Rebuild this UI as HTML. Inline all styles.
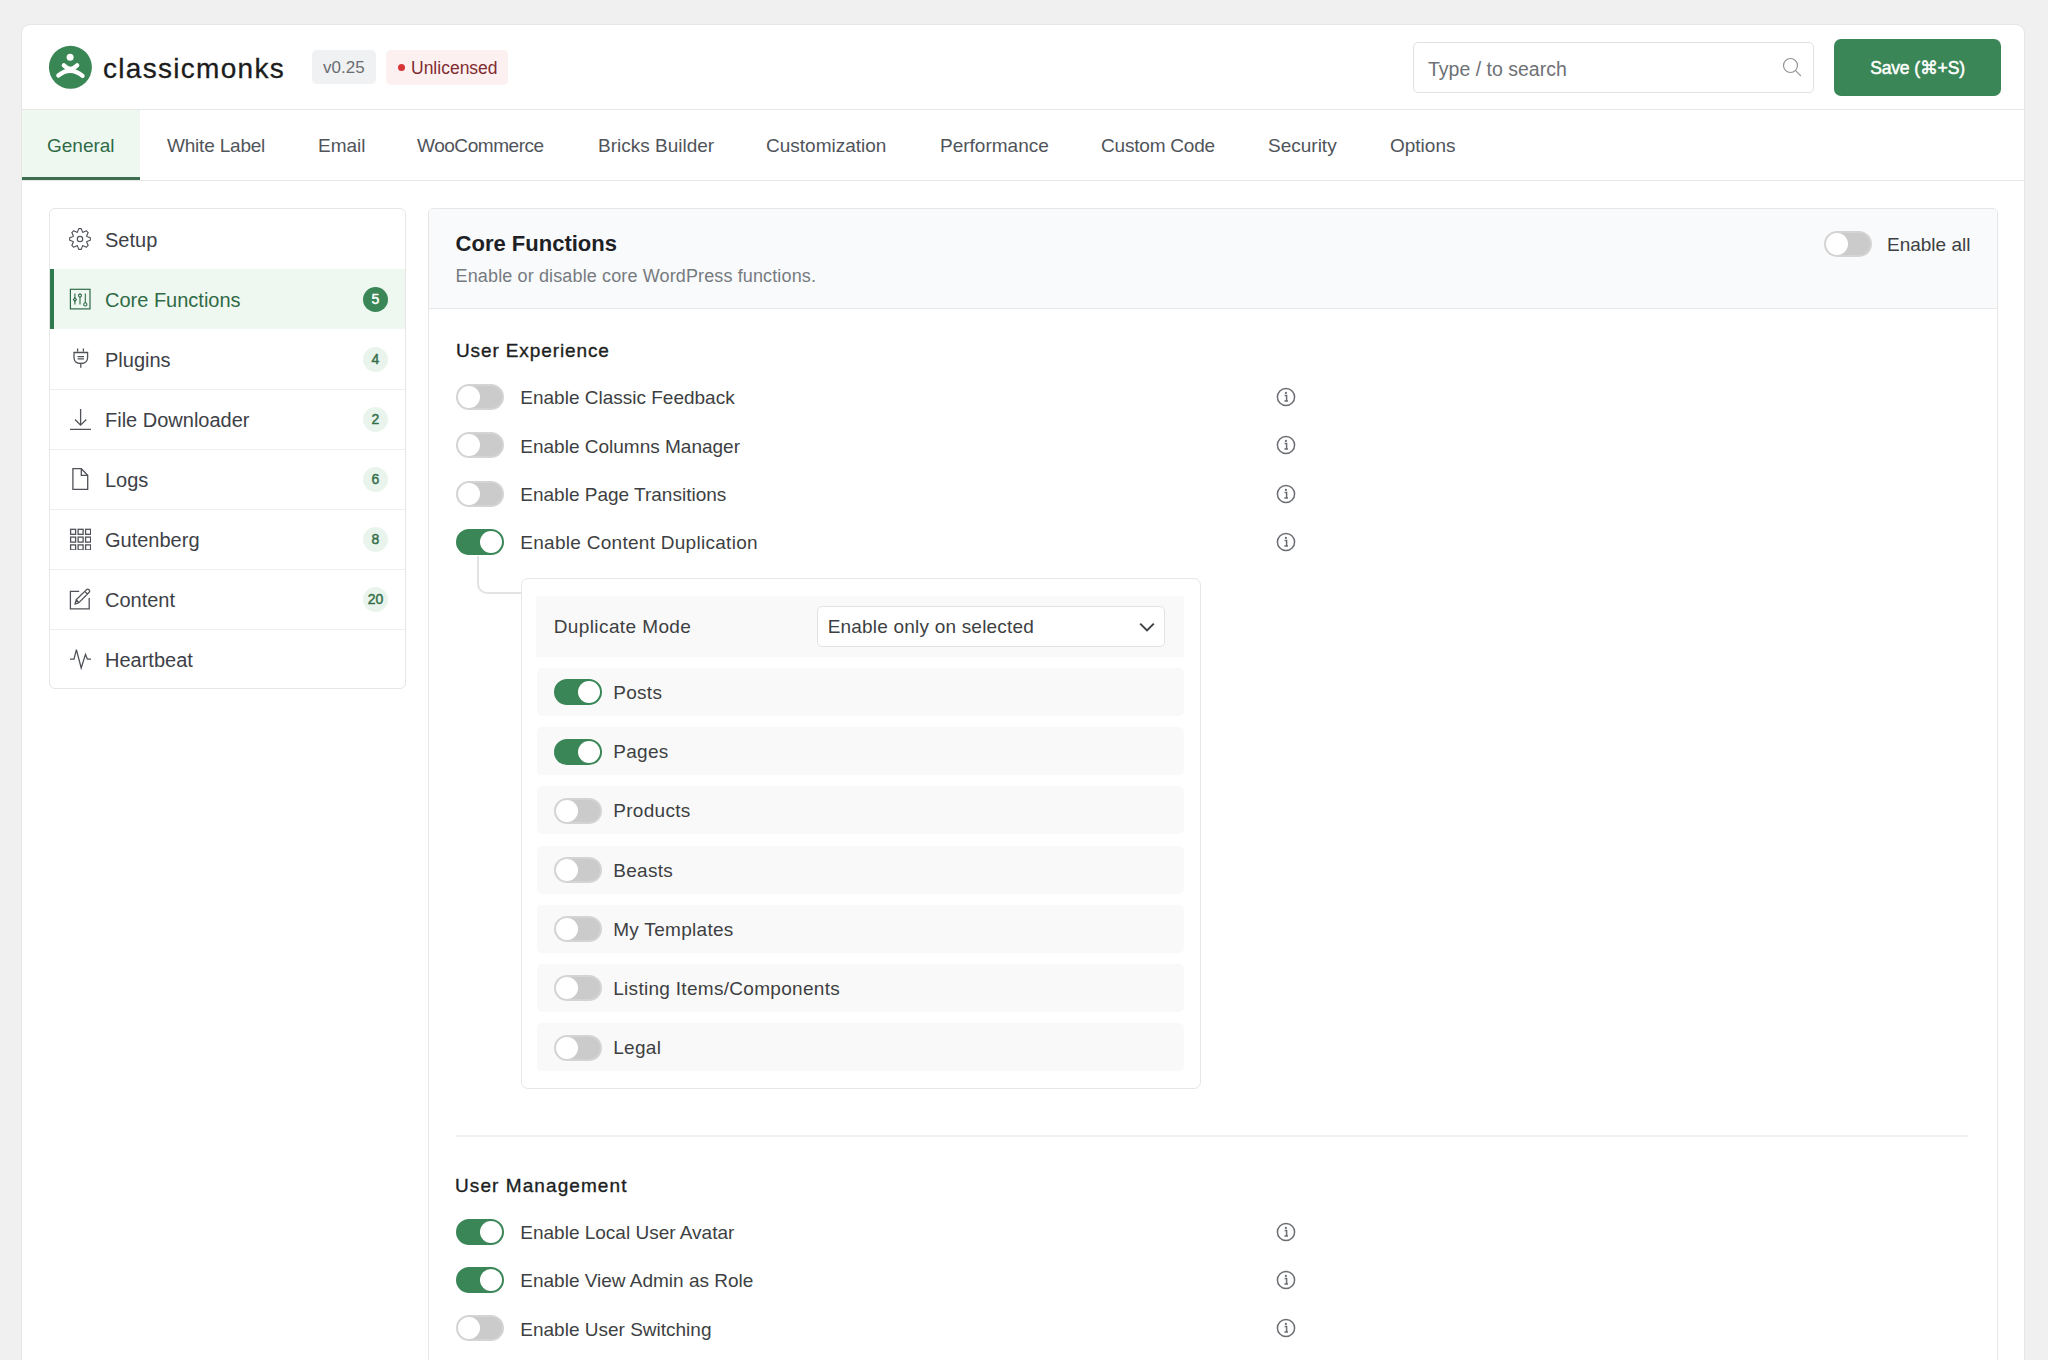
<!DOCTYPE html>
<html><head><meta charset="utf-8">
<style>
*{box-sizing:border-box;margin:0;padding:0}
html,body{width:2048px;height:1360px;overflow:hidden;background:#f0f0f0;font-family:"Liberation Sans",sans-serif;color:#3c3f44}
.abs{position:absolute}
.t{position:absolute;white-space:nowrap;line-height:20px;height:20px}
.card{position:absolute;left:21px;top:24px;width:2004px;height:1400px;background:#fff;border:1px solid #e6e6e6;border-radius:9px}
.hdr-line{position:absolute;left:22px;width:2002px;height:1px;background:#e7e7e7}
.badge{position:absolute;border-radius:5px}
.tab{position:absolute;top:136px;font-size:19px;color:#50545a;line-height:20px;white-space:nowrap}
.side{position:absolute;left:49px;top:208px;width:357px;height:481px;border:1px solid #e6e6e6;border-radius:6px;background:#fff;overflow:hidden}
.srow{position:absolute;left:0;width:355px;height:60px}
.sdiv{position:absolute;left:0;width:355px;height:1px;background:#efefef}
.slabel{position:absolute;left:55px;top:20.5px;font-size:20px;color:#3d4147;line-height:20px;white-space:nowrap}
.sbadge{position:absolute;left:313px;top:18px;width:25px;height:25px;border-radius:50%;background:#e9f4ed;color:#356f4a;font-weight:400;-webkit-text-stroke:0.45px #356f4a;font-size:14px;line-height:25px;text-align:center}
.sicon{position:absolute;left:19.2px;top:18.6px;width:22px;height:22px}
.main{position:absolute;left:428px;top:208px;width:1570px;height:1200px;border:1px solid #e6e6e6;border-radius:5px;background:#fff;overflow:hidden}
.tog{position:absolute;width:48px;height:26px;border-radius:13px;background:#cbcbcb;border:2px solid #d4d4d4}
.tog::after{content:"";position:absolute;left:0px;top:0px;width:22px;height:22px;border-radius:50%;background:#fff}
.tog.on{background:#3a8657;border-color:#3a8657}
.tog.on::after{left:22px}
.lbl{position:absolute;font-size:19px;color:#3d3f42;line-height:20px;white-space:nowrap}
.info{position:absolute;width:20px;height:20px}
</style></head><body>

<div class="card"></div>
<!-- header -->
<svg class="abs" style="left:48px;top:45px" width="44" height="44" viewBox="0 0 44 44">
  <circle cx="22.4" cy="22.3" r="21.5" fill="#3a8756"/>
  <circle cx="22.1" cy="12.2" r="3.5" fill="#fff"/>
  <path d="M15.8 20.3 Q22.4 27.4 29.2 20.3" stroke="#fff" stroke-width="4.3" stroke-linecap="round" fill="none"/>
  <path d="M10.3 30.5 Q22.4 20.8 34.6 30.9" stroke="#fff" stroke-width="4.2" stroke-linecap="round" fill="none"/>
</svg>
<div class="t" style="left:103px;top:54px;font-size:28px;line-height:30px;height:30px;letter-spacing:1.3px;-webkit-text-stroke:0.3px #1c1c1c;color:#1c1c1c">classicmonks</div>
<div class="badge" style="left:312px;top:50px;width:64px;height:34px;background:#f0f1f3"></div>
<div class="t" style="left:323px;top:58px;font-size:17px;color:#6a6d72">v0.25</div>
<div class="badge" style="left:386px;top:50px;width:122px;height:35px;background:#fdf0f0"></div>
<div class="abs" style="left:398px;top:64px;width:7px;height:7px;border-radius:50%;background:#d63638"></div>
<div class="t" style="left:411px;top:58px;font-size:17.5px;color:#7f2c31">Unlicensed</div>

<div class="abs" style="left:1413px;top:42px;width:401px;height:51px;border:1px solid #e2e2e2;border-radius:5px;background:#fff"></div>
<div class="t" style="left:1428px;top:59px;font-size:19.5px;color:#6e7176">Type / to search</div>
<svg class="abs" style="left:1780px;top:55px" width="24" height="24" viewBox="0 0 24 24">
  <circle cx="10.5" cy="10.5" r="7" stroke="#909295" stroke-width="1.2" fill="none"/>
  <path d="M15.6 15.6 L20.6 20.6" stroke="#909295" stroke-width="1.2" stroke-linecap="round"/>
</svg>
<div class="abs" style="left:1834px;top:39px;width:167px;height:57px;border-radius:7px;background:#3a8657"></div>
<div class="t" style="left:1834px;top:57.5px;width:167px;text-align:center;font-size:17.6px;-webkit-text-stroke:0.5px #fff;letter-spacing:-0.2px;color:#fff">Save (⌘+S)</div>

<div class="hdr-line" style="top:109px"></div>

<!-- tabs -->
<div class="abs" style="left:22px;top:110px;width:118px;height:70px;background:#eef8f1"></div>
<div class="abs" style="left:22px;top:177px;width:118px;height:3px;background:#3b6f4f"></div>
<div class="hdr-line" style="top:180px"></div>
<div class="tab" style="left:47px;color:#2f6b46">General</div>
<div class="tab" style="left:167px;letter-spacing:-0.2px">White Label</div>
<div class="tab" style="left:318px">Email</div>
<div class="tab" style="left:417px;letter-spacing:-0.45px">WooCommerce</div>
<div class="tab" style="left:598px">Bricks Builder</div>
<div class="tab" style="left:766px">Customization</div>
<div class="tab" style="left:940px">Performance</div>
<div class="tab" style="left:1101px;letter-spacing:-0.2px">Custom Code</div>
<div class="tab" style="left:1268px">Security</div>
<div class="tab" style="left:1390px">Options</div>


<div class="side">
  <div class="srow" style="top:0">
    <svg class="sicon" viewBox="0 0 22 22"><path d="M8.43 4.17 L9.75 0.67 L12.25 0.67 L13.57 4.17 L14.01 4.35 L17.42 2.82 L19.18 4.58 L17.65 7.99 L17.83 8.43 L21.33 9.75 L21.33 12.25 L17.83 13.57 L17.65 14.01 L19.18 17.42 L17.42 19.18 L14.01 17.65 L13.57 17.83 L12.25 21.33 L9.75 21.33 L8.43 17.83 L7.99 17.65 L4.58 19.18 L2.82 17.42 L4.35 14.01 L4.17 13.57 L0.67 12.25 L0.67 9.75 L4.17 8.43 L4.35 7.99 L2.82 4.58 L4.58 2.82 L7.99 4.35Z" fill="none" stroke="#4f5257" stroke-width="1.15" stroke-linejoin="round"/><circle cx="11" cy="11" r="2.7" fill="none" stroke="#4f5257" stroke-width="1.15"/></svg>
    <div class="slabel">Setup</div>
  </div>
  <div class="srow" style="top:60px;background:#eff7f1">
    <div class="abs" style="left:0;top:0;width:4px;height:60px;background:#2f7a4c"></div>
    <svg class="sicon" viewBox="0 0 22 22"><rect x="1.4" y="1.3" width="19.6" height="19.6" fill="none" stroke="#2f6b46" stroke-width="1.2"/>
      <path d="M5.9 5.6V16.4M11 5.6V16.4M16.3 5.6V16.4" stroke="#2f6b46" stroke-width="1.1"/>
      <path d="M5.9 9.8 L7.4 11.6 L5.9 13.4 L4.4 11.6Z" fill="#eff7f1" stroke="#2f6b46" stroke-width="1.1"/>
      <circle cx="11" cy="7.6" r="1.5" fill="#eff7f1" stroke="#2f6b46" stroke-width="1.1"/>
      <circle cx="16.3" cy="16.4" r="1.6" fill="#eff7f1" stroke="#2f6b46" stroke-width="1.1"/>
    </svg>
    <div class="slabel" style="color:#2f6b46">Core Functions</div>
    <div class="sbadge" style="background:#3a8657;color:#fff;-webkit-text-stroke:0.45px #fff">5</div>
  </div>
  <div class="srow" style="top:120px">
    <svg class="sicon" viewBox="0 0 22 22"><path d="M8.6 0.5V3.5M14.4 0.5V3.5M5 4.5H18.6V9.5Q18.6 15.5 11.8 15.5Q5 15.5 5 9.5Z M11.8 15.5V19.8 M8.6 8.6H15 M8.6 10.8H15" fill="none" stroke="#4f5257" stroke-width="1.3"/></svg>
    <div class="slabel">Plugins</div>
    <div class="sbadge">4</div>
  </div>
  <div class="sdiv" style="top:180px"></div>
  <div class="srow" style="top:180px">
    <svg class="sicon" viewBox="0 0 22 22"><path d="M11.6 1V17.2M6 11.5L11.6 17.2L17.3 11.5M1 21.5H22" fill="none" stroke="#4f5257" stroke-width="1.3"/></svg>
    <div class="slabel">File Downloader</div>
    <div class="sbadge">2</div>
  </div>
  <div class="sdiv" style="top:240px"></div>
  <div class="srow" style="top:240px">
    <svg class="sicon" viewBox="0 0 22 22"><path d="M3.9 0.7H12.3L18.7 7.3V21.3H3.9Z M12.3 0.7V7.3H18.7" fill="none" stroke="#4f5257" stroke-width="1.3" stroke-linejoin="miter"/></svg>
    <div class="slabel">Logs</div>
    <div class="sbadge">6</div>
  </div>
  <div class="sdiv" style="top:300px"></div>
  <div class="srow" style="top:300px">
    <svg class="sicon" viewBox="0 0 22 22"><g fill="none" stroke="#4f5257" stroke-width="1.3">
      <rect x="1.6" y="1.3" width="5" height="5"/><rect x="9.1" y="1.3" width="5" height="5"/><rect x="16.6" y="1.3" width="5" height="5"/>
      <rect x="1.6" y="9.1" width="5" height="5"/><rect x="9.1" y="9.1" width="5" height="5"/><rect x="16.6" y="9.1" width="5" height="5"/>
      <rect x="1.6" y="16.9" width="5" height="5"/><rect x="9.1" y="16.9" width="5" height="5"/><rect x="16.6" y="16.9" width="5" height="5"/></g></svg>
    <div class="slabel">Gutenberg</div>
    <div class="sbadge">8</div>
  </div>
  <div class="sdiv" style="top:360px"></div>
  <div class="srow" style="top:360px">
    <svg class="sicon" viewBox="0 0 22 22"><path d="M10.2 3.4H1.4V20.8H20.2V10" fill="none" stroke="#4f5257" stroke-width="1.3"/>
      <path d="M6 16.2 L7.2 11.8 L17.6 1.6 Q18.8 0.6 20 1.8 Q21.2 3 20.2 4.2 L9.9 14.6 Z M7.2 11.8 L9.9 14.6 M15.8 3.4 L18.4 6" fill="none" stroke="#4f5257" stroke-width="1.3" stroke-linejoin="round"/></svg>
    <div class="slabel">Content</div>
    <div class="sbadge">20</div>
  </div>
  <div class="sdiv" style="top:420px"></div>
  <div class="srow" style="top:420px">
    <svg class="sicon" viewBox="0 0 22 22"><path d="M1 11.2H5L7.4 1.6L12.2 20L16.5 6.4L18.4 11.2H22" fill="none" stroke="#4f5257" stroke-width="1.3" stroke-linejoin="miter"/></svg>
    <div class="slabel">Heartbeat</div>
  </div>
</div>

<div class="main">
<div class="abs" style="left:0;top:0;width:1568px;height:100px;background:#f9fafb;border-bottom:1px solid #e8e9eb"></div>
<div class="lbl" style="left:26.6px;top:25.2px;font-size:22px;font-weight:700;color:#1d2125">Core Functions</div>
<div class="lbl" style="left:26.6px;top:56.8px;font-size:18px;letter-spacing:0.13px;color:#767a80">Enable or disable core WordPress functions.</div>
<div class="tog" style="left:1394.5px;top:22.0px"></div>
<div class="lbl" style="left:1458.0px;top:26.4px;">Enable all</div>
<div class="lbl" style="left:26.9px;top:132.1px;-webkit-text-stroke:0.35px #1d1f22;letter-spacing:0.9px;color:#1d1f22">User Experience</div>
<div class="tog" style="left:27.0px;top:175.0px"></div>
<div class="lbl" style="left:91.3px;top:179.2px;">Enable Classic Feedback</div>
<svg class="info" style="left:847.0px;top:178.0px" viewBox="0 0 20 20"><circle cx="10" cy="10" r="8.6" fill="none" stroke="#6b6e72" stroke-width="1.5"/><circle cx="9.9" cy="5.9" r="1.1" fill="#6b6e72"/><path d="M8.6 8.4H10.6V13.6M8.4 14.1H12" fill="none" stroke="#6b6e72" stroke-width="1.5"/></svg>
<div class="tog" style="left:27.0px;top:223.3px"></div>
<div class="lbl" style="left:91.3px;top:227.5px;">Enable Columns Manager</div>
<svg class="info" style="left:847.0px;top:226.3px" viewBox="0 0 20 20"><circle cx="10" cy="10" r="8.6" fill="none" stroke="#6b6e72" stroke-width="1.5"/><circle cx="9.9" cy="5.9" r="1.1" fill="#6b6e72"/><path d="M8.6 8.4H10.6V13.6M8.4 14.1H12" fill="none" stroke="#6b6e72" stroke-width="1.5"/></svg>
<div class="tog" style="left:27.0px;top:271.6px"></div>
<div class="lbl" style="left:91.3px;top:275.8px;">Enable Page Transitions</div>
<svg class="info" style="left:847.0px;top:274.6px" viewBox="0 0 20 20"><circle cx="10" cy="10" r="8.6" fill="none" stroke="#6b6e72" stroke-width="1.5"/><circle cx="9.9" cy="5.9" r="1.1" fill="#6b6e72"/><path d="M8.6 8.4H10.6V13.6M8.4 14.1H12" fill="none" stroke="#6b6e72" stroke-width="1.5"/></svg>
<div class="tog on" style="left:27.0px;top:319.9px"></div>
<div class="lbl" style="left:91.3px;top:324.1px;letter-spacing:0.28px">Enable Content Duplication</div>
<svg class="info" style="left:847.0px;top:322.9px" viewBox="0 0 20 20"><circle cx="10" cy="10" r="8.6" fill="none" stroke="#6b6e72" stroke-width="1.5"/><circle cx="9.9" cy="5.9" r="1.1" fill="#6b6e72"/><path d="M8.6 8.4H10.6V13.6M8.4 14.1H12" fill="none" stroke="#6b6e72" stroke-width="1.5"/></svg>
<div class="abs" style="left:47.5px;top:347px;width:12px;height:38px;border-left:2px solid #e3e3e3;border-bottom:2px solid #e3e3e3;border-bottom-left-radius:10px"></div>
<div class="abs" style="left:59px;top:383px;width:34px;height:2px;background:#e3e3e3"></div>
<div class="abs" style="left:92px;top:368.5px;width:680px;height:511px;border:1px solid #e6e6e6;border-radius:7px;background:#fff"></div>
<div class="abs" style="left:107px;top:387px;width:648px;height:61px;background:#f9f9f9;border-radius:2px"></div>
<div class="lbl" style="left:124.7px;top:407.8px;letter-spacing:0.4px">Duplicate Mode</div>
<div class="abs" style="left:388px;top:396.5px;width:348px;height:41px;border:1px solid #e3e3e3;border-radius:5px;background:#fff"></div>
<div class="lbl" style="left:398.7px;top:407.5px;letter-spacing:0.2px">Enable only on selected</div>
<svg class="abs" style="left:709px;top:411px" width="18" height="14" viewBox="0 0 18 14"><path d="M2.2 3.6L9 10.4L15.8 3.6" fill="none" stroke="#3f4246" stroke-width="2"/></svg>
<div class="abs" style="left:108px;top:459.0px;width:647px;height:48px;background:#f9f9f9;border-radius:5px"></div>
<div class="tog on" style="left:125.0px;top:470.3px"></div>
<div class="lbl" style="left:184.2px;top:474.0px;letter-spacing:0.3px">Posts</div>
<div class="abs" style="left:108px;top:518.2px;width:647px;height:48px;background:#f9f9f9;border-radius:5px"></div>
<div class="tog on" style="left:125.0px;top:529.5px"></div>
<div class="lbl" style="left:184.2px;top:533.2px;letter-spacing:0.3px">Pages</div>
<div class="abs" style="left:108px;top:577.4px;width:647px;height:48px;background:#f9f9f9;border-radius:5px"></div>
<div class="tog" style="left:125.0px;top:588.7px"></div>
<div class="lbl" style="left:184.2px;top:592.4px;letter-spacing:0.3px">Products</div>
<div class="abs" style="left:108px;top:636.6px;width:647px;height:48px;background:#f9f9f9;border-radius:5px"></div>
<div class="tog" style="left:125.0px;top:647.9px"></div>
<div class="lbl" style="left:184.2px;top:651.6px;letter-spacing:0.3px">Beasts</div>
<div class="abs" style="left:108px;top:695.8px;width:647px;height:48px;background:#f9f9f9;border-radius:5px"></div>
<div class="tog" style="left:125.0px;top:707.1px"></div>
<div class="lbl" style="left:184.2px;top:710.8px;letter-spacing:0.3px">My Templates</div>
<div class="abs" style="left:108px;top:755.0px;width:647px;height:48px;background:#f9f9f9;border-radius:5px"></div>
<div class="tog" style="left:125.0px;top:766.3px"></div>
<div class="lbl" style="left:184.2px;top:770.0px;letter-spacing:0.3px">Listing Items/Components</div>
<div class="abs" style="left:108px;top:814.2px;width:647px;height:48px;background:#f9f9f9;border-radius:5px"></div>
<div class="tog" style="left:125.0px;top:825.5px"></div>
<div class="lbl" style="left:184.2px;top:829.2px;letter-spacing:0.3px">Legal</div>
<div class="abs" style="left:27px;top:926px;width:1512px;height:2px;background:#f1f1f1"></div>
<div class="lbl" style="left:26.0px;top:967.0px;-webkit-text-stroke:0.35px #1d1f22;letter-spacing:1.08px;color:#1d1f22">User Management</div>
<div class="tog on" style="left:27.0px;top:1009.8px"></div>
<div class="lbl" style="left:91.3px;top:1014.0px;">Enable Local User Avatar</div>
<svg class="info" style="left:847.0px;top:1012.8px" viewBox="0 0 20 20"><circle cx="10" cy="10" r="8.6" fill="none" stroke="#6b6e72" stroke-width="1.5"/><circle cx="9.9" cy="5.9" r="1.1" fill="#6b6e72"/><path d="M8.6 8.4H10.6V13.6M8.4 14.1H12" fill="none" stroke="#6b6e72" stroke-width="1.5"/></svg>
<div class="tog on" style="left:27.0px;top:1058.1px"></div>
<div class="lbl" style="left:91.3px;top:1062.3px;">Enable View Admin as Role</div>
<svg class="info" style="left:847.0px;top:1061.1px" viewBox="0 0 20 20"><circle cx="10" cy="10" r="8.6" fill="none" stroke="#6b6e72" stroke-width="1.5"/><circle cx="9.9" cy="5.9" r="1.1" fill="#6b6e72"/><path d="M8.6 8.4H10.6V13.6M8.4 14.1H12" fill="none" stroke="#6b6e72" stroke-width="1.5"/></svg>
<div class="tog" style="left:27.0px;top:1106.4px"></div>
<div class="lbl" style="left:91.3px;top:1110.6px;">Enable User Switching</div>
<svg class="info" style="left:847.0px;top:1109.4px" viewBox="0 0 20 20"><circle cx="10" cy="10" r="8.6" fill="none" stroke="#6b6e72" stroke-width="1.5"/><circle cx="9.9" cy="5.9" r="1.1" fill="#6b6e72"/><path d="M8.6 8.4H10.6V13.6M8.4 14.1H12" fill="none" stroke="#6b6e72" stroke-width="1.5"/></svg>
</div>

</body></html>
